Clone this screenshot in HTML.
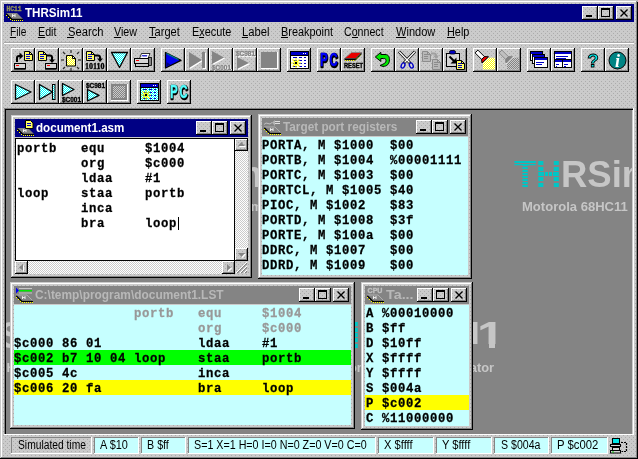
<!DOCTYPE html>
<html><head><meta charset="utf-8"><title>THRSim11</title><style>
html,body{margin:0;padding:0}
body{width:638px;height:459px;position:relative;overflow:hidden;background:#cbcbcb;will-change:transform}
div,.a,.t{position:absolute}
.t{white-space:pre;transform-origin:0 0;line-height:normal;display:block;font-family:"Liberation Sans",sans-serif}
.b{font-weight:bold}
.mo{font-family:"Liberation Mono",monospace}
svg{display:block;overflow:hidden}
.m{font:bold 12.3px "Liberation Mono",monospace;letter-spacing:.62px;transform:scaleY(1.1);transform-origin:0 10px;-webkit-text-stroke:.25px}
</style></head><body>
<svg width="0" height="0" style="position:absolute"><defs>
<pattern id="d" width="4" height="4" patternUnits="userSpaceOnUse"><rect width="4" height="4" fill="#cbcbcb"/><rect x="1" y="1" width="1" height="1" fill="#acacac"/><rect x="3" y="3" width="1" height="1" fill="#acacac"/></pattern>
<pattern id="ck" width="2" height="2" patternUnits="userSpaceOnUse"><rect width="2" height="2" fill="#fff"/><rect x="0" y="0" width="1" height="1" fill="#cbcbcb"/><rect x="1" y="1" width="1" height="1" fill="#cbcbcb"/></pattern>
<pattern id="cc" width="2" height="2" patternUnits="userSpaceOnUse"><rect width="2" height="2" fill="#fff"/><rect x="0" y="0" width="1" height="1" fill="#00ffff"/><rect x="1" y="1" width="1" height="1" fill="#00ffff"/></pattern>
<pattern id="yy" width="2" height="2" patternUnits="userSpaceOnUse"><rect width="2" height="2" fill="#fff"/><rect x="0" y="0" width="1" height="1" fill="#ffff00"/><rect x="1" y="1" width="1" height="1" fill="#ffff00"/></pattern>
<pattern id="gg" width="2" height="2" patternUnits="userSpaceOnUse"><rect width="2" height="2" fill="#cbcbcb"/><rect x="0" y="0" width="1" height="1" fill="#848484"/><rect x="1" y="1" width="1" height="1" fill="#848484"/></pattern>
</defs></svg>
<svg class="a" style="left:0px;top:0px" width="638" height="459"><rect width="638" height="459" fill="url(#d)"/></svg>
<div style="left:0px;top:0px;width:638px;height:1px;background:#c8c8c8;"></div>
<div style="left:0px;top:0px;width:1px;height:459px;background:#c8c8c8;"></div>
<div style="left:1px;top:1px;width:636px;height:1px;background:#fff;"></div>
<div style="left:1px;top:1px;width:1px;height:457px;background:#fff;"></div>
<div style="left:636px;top:1px;width:1px;height:457px;background:#848484;"></div>
<div style="left:637px;top:0px;width:1px;height:459px;background:#000;"></div>
<div style="left:637px;top:0px;width:1px;height:2px;background:#b4b4b4;"></div>
<div style="left:1px;top:457px;width:636px;height:1px;background:#848484;"></div>
<div style="left:0px;top:458px;width:638px;height:1px;background:#000;"></div>
<div style="left:4px;top:4px;width:630px;height:18px;background:#000084;"></div>
<span class="t b" style="left:25.37px;top:6px;font-size:12px;color:#fff;transform:scaleX(0.9678);">THRSim11</span>
<svg class="a" style="left:582px;top:6px" width="16" height="14"><rect width="16" height="14" fill="url(#d)"/></svg>
<div style="left:582px;top:6px;width:15px;height:1px;background:#fff;"></div>
<div style="left:582px;top:6px;width:1px;height:13px;background:#fff;"></div>
<div style="left:597px;top:6px;width:1px;height:14px;background:#000;"></div>
<div style="left:582px;top:19px;width:16px;height:1px;background:#000;"></div>
<div style="left:596px;top:7px;width:1px;height:12px;background:#848484;"></div>
<div style="left:583px;top:18px;width:14px;height:1px;background:#848484;"></div>
<div style="left:586px;top:15px;width:6px;height:2px;background:#000;"></div>
<svg class="a" style="left:598px;top:6px" width="16" height="14"><rect width="16" height="14" fill="url(#d)"/></svg>
<div style="left:598px;top:6px;width:15px;height:1px;background:#fff;"></div>
<div style="left:598px;top:6px;width:1px;height:13px;background:#fff;"></div>
<div style="left:613px;top:6px;width:1px;height:14px;background:#000;"></div>
<div style="left:598px;top:19px;width:16px;height:1px;background:#000;"></div>
<div style="left:612px;top:7px;width:1px;height:12px;background:#848484;"></div>
<div style="left:599px;top:18px;width:14px;height:1px;background:#848484;"></div>
<div style="left:601px;top:8px;width:9px;height:2px;background:#000;"></div>
<div style="left:601px;top:8px;width:1px;height:9px;background:#000;"></div>
<div style="left:609px;top:8px;width:1px;height:9px;background:#000;"></div>
<div style="left:601px;top:16px;width:9px;height:1px;background:#000;"></div>
<svg class="a" style="left:616px;top:6px" width="16" height="14"><rect width="16" height="14" fill="url(#d)"/></svg>
<div style="left:616px;top:6px;width:15px;height:1px;background:#fff;"></div>
<div style="left:616px;top:6px;width:1px;height:13px;background:#fff;"></div>
<div style="left:631px;top:6px;width:1px;height:14px;background:#000;"></div>
<div style="left:616px;top:19px;width:16px;height:1px;background:#000;"></div>
<div style="left:630px;top:7px;width:1px;height:12px;background:#848484;"></div>
<div style="left:617px;top:18px;width:14px;height:1px;background:#848484;"></div>
<svg class="a" style="left:616px;top:6px" width="16" height="14" viewBox="0 0 16 14"><path d="M4.5 3.5l7 7M11.5 3.5l-7 7" stroke="#000" stroke-width="1.4" fill="none"/></svg>
<span class="t" style="left:10.17px;top:25px;font-size:12px;color:#000;transform:scaleX(0.8418);">File</span>
<div style="left:10px;top:37px;width:6px;height:1px;background:#000;"></div>
<span class="t" style="left:37.62px;top:25px;font-size:12px;color:#000;transform:scaleX(0.8925);">Edit</span>
<div style="left:38px;top:37px;width:7px;height:1px;background:#000;"></div>
<span class="t" style="left:67.50px;top:25px;font-size:12px;color:#000;transform:scaleX(0.9344);">Search</span>
<div style="left:67px;top:37px;width:7px;height:1px;background:#000;"></div>
<span class="t" style="left:114.26px;top:25px;font-size:12px;color:#000;transform:scaleX(0.8923);">View</span>
<div style="left:114px;top:37px;width:7px;height:1px;background:#000;"></div>
<span class="t" style="left:149.46px;top:25px;font-size:12px;color:#000;transform:scaleX(0.9242);">Target</span>
<div style="left:149px;top:37px;width:7px;height:1px;background:#000;"></div>
<span class="t" style="left:192.11px;top:25px;font-size:12px;color:#000;transform:scaleX(0.9081);">Execute</span>
<div style="left:199px;top:37px;width:5px;height:1px;background:#000;"></div>
<span class="t" style="left:242.38px;top:25px;font-size:12px;color:#000;transform:scaleX(0.9388);">Label</span>
<div style="left:242px;top:37px;width:6px;height:1px;background:#000;"></div>
<span class="t" style="left:280.71px;top:25px;font-size:12px;color:#000;transform:scaleX(0.9076);">Breakpoint</span>
<div style="left:281px;top:37px;width:7px;height:1px;background:#000;"></div>
<span class="t" style="left:344.47px;top:25px;font-size:12px;color:#000;transform:scaleX(0.8860);">Connect</span>
<div style="left:352px;top:37px;width:6px;height:1px;background:#000;"></div>
<span class="t" style="left:395.96px;top:25px;font-size:12px;color:#000;transform:scaleX(0.9212);">Window</span>
<div style="left:396px;top:37px;width:10px;height:1px;background:#000;"></div>
<span class="t" style="left:447.11px;top:25px;font-size:12px;color:#000;transform:scaleX(0.9049);">Help</span>
<div style="left:447px;top:37px;width:8px;height:1px;background:#000;"></div>
<div style="left:4px;top:42px;width:630px;height:1px;background:#a8a8a8;"></div>
<div style="left:4px;top:43px;width:630px;height:1px;background:#fff;"></div>
<div style="left:11px;top:48px;width:23px;height:1px;background:#fff;"></div>
<div style="left:11px;top:48px;width:1px;height:23px;background:#fff;"></div>
<div style="left:34px;top:48px;width:1px;height:24px;background:#000;"></div>
<div style="left:11px;top:71px;width:24px;height:1px;background:#000;"></div>
<div style="left:33px;top:49px;width:1px;height:22px;background:#848484;"></div>
<div style="left:12px;top:70px;width:22px;height:1px;background:#848484;"></div>
<div style="left:35px;top:48px;width:23px;height:1px;background:#fff;"></div>
<div style="left:35px;top:48px;width:1px;height:23px;background:#fff;"></div>
<div style="left:58px;top:48px;width:1px;height:24px;background:#000;"></div>
<div style="left:35px;top:71px;width:24px;height:1px;background:#000;"></div>
<div style="left:57px;top:49px;width:1px;height:22px;background:#848484;"></div>
<div style="left:36px;top:70px;width:22px;height:1px;background:#848484;"></div>
<div style="left:59px;top:48px;width:23px;height:1px;background:#fff;"></div>
<div style="left:59px;top:48px;width:1px;height:23px;background:#fff;"></div>
<div style="left:82px;top:48px;width:1px;height:24px;background:#000;"></div>
<div style="left:59px;top:71px;width:24px;height:1px;background:#000;"></div>
<div style="left:81px;top:49px;width:1px;height:22px;background:#848484;"></div>
<div style="left:60px;top:70px;width:22px;height:1px;background:#848484;"></div>
<div style="left:83px;top:48px;width:23px;height:1px;background:#fff;"></div>
<div style="left:83px;top:48px;width:1px;height:23px;background:#fff;"></div>
<div style="left:106px;top:48px;width:1px;height:24px;background:#000;"></div>
<div style="left:83px;top:71px;width:24px;height:1px;background:#000;"></div>
<div style="left:105px;top:49px;width:1px;height:22px;background:#848484;"></div>
<div style="left:84px;top:70px;width:22px;height:1px;background:#848484;"></div>
<div style="left:107px;top:48px;width:23px;height:1px;background:#fff;"></div>
<div style="left:107px;top:48px;width:1px;height:23px;background:#fff;"></div>
<div style="left:130px;top:48px;width:1px;height:24px;background:#000;"></div>
<div style="left:107px;top:71px;width:24px;height:1px;background:#000;"></div>
<div style="left:129px;top:49px;width:1px;height:22px;background:#848484;"></div>
<div style="left:108px;top:70px;width:22px;height:1px;background:#848484;"></div>
<div style="left:131px;top:48px;width:23px;height:1px;background:#fff;"></div>
<div style="left:131px;top:48px;width:1px;height:23px;background:#fff;"></div>
<div style="left:154px;top:48px;width:1px;height:24px;background:#000;"></div>
<div style="left:131px;top:71px;width:24px;height:1px;background:#000;"></div>
<div style="left:153px;top:49px;width:1px;height:22px;background:#848484;"></div>
<div style="left:132px;top:70px;width:22px;height:1px;background:#848484;"></div>
<div style="left:161px;top:48px;width:23px;height:1px;background:#fff;"></div>
<div style="left:161px;top:48px;width:1px;height:23px;background:#fff;"></div>
<div style="left:184px;top:48px;width:1px;height:24px;background:#000;"></div>
<div style="left:161px;top:71px;width:24px;height:1px;background:#000;"></div>
<div style="left:183px;top:49px;width:1px;height:22px;background:#848484;"></div>
<div style="left:162px;top:70px;width:22px;height:1px;background:#848484;"></div>
<div style="left:185px;top:48px;width:23px;height:1px;background:#fff;"></div>
<div style="left:185px;top:48px;width:1px;height:23px;background:#fff;"></div>
<div style="left:208px;top:48px;width:1px;height:24px;background:#000;"></div>
<div style="left:185px;top:71px;width:24px;height:1px;background:#000;"></div>
<div style="left:207px;top:49px;width:1px;height:22px;background:#848484;"></div>
<div style="left:186px;top:70px;width:22px;height:1px;background:#848484;"></div>
<div style="left:209px;top:48px;width:23px;height:1px;background:#fff;"></div>
<div style="left:209px;top:48px;width:1px;height:23px;background:#fff;"></div>
<div style="left:232px;top:48px;width:1px;height:24px;background:#000;"></div>
<div style="left:209px;top:71px;width:24px;height:1px;background:#000;"></div>
<div style="left:231px;top:49px;width:1px;height:22px;background:#848484;"></div>
<div style="left:210px;top:70px;width:22px;height:1px;background:#848484;"></div>
<div style="left:233px;top:48px;width:23px;height:1px;background:#fff;"></div>
<div style="left:233px;top:48px;width:1px;height:23px;background:#fff;"></div>
<div style="left:256px;top:48px;width:1px;height:24px;background:#000;"></div>
<div style="left:233px;top:71px;width:24px;height:1px;background:#000;"></div>
<div style="left:255px;top:49px;width:1px;height:22px;background:#848484;"></div>
<div style="left:234px;top:70px;width:22px;height:1px;background:#848484;"></div>
<div style="left:257px;top:48px;width:23px;height:1px;background:#fff;"></div>
<div style="left:257px;top:48px;width:1px;height:23px;background:#fff;"></div>
<div style="left:280px;top:48px;width:1px;height:24px;background:#000;"></div>
<div style="left:257px;top:71px;width:24px;height:1px;background:#000;"></div>
<div style="left:279px;top:49px;width:1px;height:22px;background:#848484;"></div>
<div style="left:258px;top:70px;width:22px;height:1px;background:#848484;"></div>
<div style="left:287px;top:48px;width:23px;height:1px;background:#fff;"></div>
<div style="left:287px;top:48px;width:1px;height:23px;background:#fff;"></div>
<div style="left:310px;top:48px;width:1px;height:24px;background:#000;"></div>
<div style="left:287px;top:71px;width:24px;height:1px;background:#000;"></div>
<div style="left:309px;top:49px;width:1px;height:22px;background:#848484;"></div>
<div style="left:288px;top:70px;width:22px;height:1px;background:#848484;"></div>
<div style="left:317px;top:48px;width:23px;height:1px;background:#fff;"></div>
<div style="left:317px;top:48px;width:1px;height:23px;background:#fff;"></div>
<div style="left:340px;top:48px;width:1px;height:24px;background:#000;"></div>
<div style="left:317px;top:71px;width:24px;height:1px;background:#000;"></div>
<div style="left:339px;top:49px;width:1px;height:22px;background:#848484;"></div>
<div style="left:318px;top:70px;width:22px;height:1px;background:#848484;"></div>
<div style="left:341px;top:48px;width:23px;height:1px;background:#fff;"></div>
<div style="left:341px;top:48px;width:1px;height:23px;background:#fff;"></div>
<div style="left:364px;top:48px;width:1px;height:24px;background:#000;"></div>
<div style="left:341px;top:71px;width:24px;height:1px;background:#000;"></div>
<div style="left:363px;top:49px;width:1px;height:22px;background:#848484;"></div>
<div style="left:342px;top:70px;width:22px;height:1px;background:#848484;"></div>
<div style="left:371px;top:48px;width:23px;height:1px;background:#fff;"></div>
<div style="left:371px;top:48px;width:1px;height:23px;background:#fff;"></div>
<div style="left:394px;top:48px;width:1px;height:24px;background:#000;"></div>
<div style="left:371px;top:71px;width:24px;height:1px;background:#000;"></div>
<div style="left:393px;top:49px;width:1px;height:22px;background:#848484;"></div>
<div style="left:372px;top:70px;width:22px;height:1px;background:#848484;"></div>
<div style="left:395px;top:48px;width:23px;height:1px;background:#fff;"></div>
<div style="left:395px;top:48px;width:1px;height:23px;background:#fff;"></div>
<div style="left:418px;top:48px;width:1px;height:24px;background:#000;"></div>
<div style="left:395px;top:71px;width:24px;height:1px;background:#000;"></div>
<div style="left:417px;top:49px;width:1px;height:22px;background:#848484;"></div>
<div style="left:396px;top:70px;width:22px;height:1px;background:#848484;"></div>
<div style="left:419px;top:48px;width:23px;height:1px;background:#fff;"></div>
<div style="left:419px;top:48px;width:1px;height:23px;background:#fff;"></div>
<div style="left:442px;top:48px;width:1px;height:24px;background:#000;"></div>
<div style="left:419px;top:71px;width:24px;height:1px;background:#000;"></div>
<div style="left:441px;top:49px;width:1px;height:22px;background:#848484;"></div>
<div style="left:420px;top:70px;width:22px;height:1px;background:#848484;"></div>
<div style="left:443px;top:48px;width:23px;height:1px;background:#fff;"></div>
<div style="left:443px;top:48px;width:1px;height:23px;background:#fff;"></div>
<div style="left:466px;top:48px;width:1px;height:24px;background:#000;"></div>
<div style="left:443px;top:71px;width:24px;height:1px;background:#000;"></div>
<div style="left:465px;top:49px;width:1px;height:22px;background:#848484;"></div>
<div style="left:444px;top:70px;width:22px;height:1px;background:#848484;"></div>
<div style="left:473px;top:48px;width:23px;height:1px;background:#fff;"></div>
<div style="left:473px;top:48px;width:1px;height:23px;background:#fff;"></div>
<div style="left:496px;top:48px;width:1px;height:24px;background:#000;"></div>
<div style="left:473px;top:71px;width:24px;height:1px;background:#000;"></div>
<div style="left:495px;top:49px;width:1px;height:22px;background:#848484;"></div>
<div style="left:474px;top:70px;width:22px;height:1px;background:#848484;"></div>
<div style="left:497px;top:48px;width:23px;height:1px;background:#fff;"></div>
<div style="left:497px;top:48px;width:1px;height:23px;background:#fff;"></div>
<div style="left:520px;top:48px;width:1px;height:24px;background:#000;"></div>
<div style="left:497px;top:71px;width:24px;height:1px;background:#000;"></div>
<div style="left:519px;top:49px;width:1px;height:22px;background:#848484;"></div>
<div style="left:498px;top:70px;width:22px;height:1px;background:#848484;"></div>
<div style="left:527px;top:48px;width:23px;height:1px;background:#fff;"></div>
<div style="left:527px;top:48px;width:1px;height:23px;background:#fff;"></div>
<div style="left:550px;top:48px;width:1px;height:24px;background:#000;"></div>
<div style="left:527px;top:71px;width:24px;height:1px;background:#000;"></div>
<div style="left:549px;top:49px;width:1px;height:22px;background:#848484;"></div>
<div style="left:528px;top:70px;width:22px;height:1px;background:#848484;"></div>
<div style="left:551px;top:48px;width:23px;height:1px;background:#fff;"></div>
<div style="left:551px;top:48px;width:1px;height:23px;background:#fff;"></div>
<div style="left:574px;top:48px;width:1px;height:24px;background:#000;"></div>
<div style="left:551px;top:71px;width:24px;height:1px;background:#000;"></div>
<div style="left:573px;top:49px;width:1px;height:22px;background:#848484;"></div>
<div style="left:552px;top:70px;width:22px;height:1px;background:#848484;"></div>
<div style="left:581px;top:48px;width:23px;height:1px;background:#fff;"></div>
<div style="left:581px;top:48px;width:1px;height:23px;background:#fff;"></div>
<div style="left:604px;top:48px;width:1px;height:24px;background:#000;"></div>
<div style="left:581px;top:71px;width:24px;height:1px;background:#000;"></div>
<div style="left:603px;top:49px;width:1px;height:22px;background:#848484;"></div>
<div style="left:582px;top:70px;width:22px;height:1px;background:#848484;"></div>
<div style="left:605px;top:48px;width:23px;height:1px;background:#fff;"></div>
<div style="left:605px;top:48px;width:1px;height:23px;background:#fff;"></div>
<div style="left:628px;top:48px;width:1px;height:24px;background:#000;"></div>
<div style="left:605px;top:71px;width:24px;height:1px;background:#000;"></div>
<div style="left:627px;top:49px;width:1px;height:22px;background:#848484;"></div>
<div style="left:606px;top:70px;width:22px;height:1px;background:#848484;"></div>
<div style="left:11px;top:80px;width:23px;height:1px;background:#fff;"></div>
<div style="left:11px;top:80px;width:1px;height:23px;background:#fff;"></div>
<div style="left:34px;top:80px;width:1px;height:24px;background:#000;"></div>
<div style="left:11px;top:103px;width:24px;height:1px;background:#000;"></div>
<div style="left:33px;top:81px;width:1px;height:22px;background:#848484;"></div>
<div style="left:12px;top:102px;width:22px;height:1px;background:#848484;"></div>
<div style="left:35px;top:80px;width:23px;height:1px;background:#fff;"></div>
<div style="left:35px;top:80px;width:1px;height:23px;background:#fff;"></div>
<div style="left:58px;top:80px;width:1px;height:24px;background:#000;"></div>
<div style="left:35px;top:103px;width:24px;height:1px;background:#000;"></div>
<div style="left:57px;top:81px;width:1px;height:22px;background:#848484;"></div>
<div style="left:36px;top:102px;width:22px;height:1px;background:#848484;"></div>
<div style="left:59px;top:80px;width:23px;height:1px;background:#fff;"></div>
<div style="left:59px;top:80px;width:1px;height:23px;background:#fff;"></div>
<div style="left:82px;top:80px;width:1px;height:24px;background:#000;"></div>
<div style="left:59px;top:103px;width:24px;height:1px;background:#000;"></div>
<div style="left:81px;top:81px;width:1px;height:22px;background:#848484;"></div>
<div style="left:60px;top:102px;width:22px;height:1px;background:#848484;"></div>
<div style="left:83px;top:80px;width:23px;height:1px;background:#fff;"></div>
<div style="left:83px;top:80px;width:1px;height:23px;background:#fff;"></div>
<div style="left:106px;top:80px;width:1px;height:24px;background:#000;"></div>
<div style="left:83px;top:103px;width:24px;height:1px;background:#000;"></div>
<div style="left:105px;top:81px;width:1px;height:22px;background:#848484;"></div>
<div style="left:84px;top:102px;width:22px;height:1px;background:#848484;"></div>
<div style="left:107px;top:80px;width:23px;height:1px;background:#fff;"></div>
<div style="left:107px;top:80px;width:1px;height:23px;background:#fff;"></div>
<div style="left:130px;top:80px;width:1px;height:24px;background:#000;"></div>
<div style="left:107px;top:103px;width:24px;height:1px;background:#000;"></div>
<div style="left:129px;top:81px;width:1px;height:22px;background:#848484;"></div>
<div style="left:108px;top:102px;width:22px;height:1px;background:#848484;"></div>
<div style="left:137px;top:80px;width:23px;height:1px;background:#fff;"></div>
<div style="left:137px;top:80px;width:1px;height:23px;background:#fff;"></div>
<div style="left:160px;top:80px;width:1px;height:24px;background:#000;"></div>
<div style="left:137px;top:103px;width:24px;height:1px;background:#000;"></div>
<div style="left:159px;top:81px;width:1px;height:22px;background:#848484;"></div>
<div style="left:138px;top:102px;width:22px;height:1px;background:#848484;"></div>
<div style="left:167px;top:80px;width:23px;height:1px;background:#fff;"></div>
<div style="left:167px;top:80px;width:1px;height:23px;background:#fff;"></div>
<div style="left:190px;top:80px;width:1px;height:24px;background:#000;"></div>
<div style="left:167px;top:103px;width:24px;height:1px;background:#000;"></div>
<div style="left:189px;top:81px;width:1px;height:22px;background:#848484;"></div>
<div style="left:168px;top:102px;width:22px;height:1px;background:#848484;"></div>
<div style="left:4px;top:108px;width:630px;height:1px;background:#848484;"></div>
<div style="left:4px;top:108px;width:1px;height:327px;background:#848484;"></div>
<div style="left:5px;top:109px;width:628px;height:1px;background:#000;"></div>
<div style="left:5px;top:109px;width:1px;height:325px;background:#000;"></div>
<div style="left:6px;top:110px;width:626px;height:324px;background:#848484;"></div>
<div style="left:633px;top:108px;width:1px;height:327px;background:#fff;"></div>
<div style="left:4px;top:434px;width:630px;height:1px;background:#fff;"></div>
<div style="left:6px;top:110px;width:626px;height:324px;overflow:hidden">
<span class="t b" style="left:115.60px;top:44px;font-size:36px;color:#00c6c6;transform:scaleX(1.0122);">T</span>
<span class="t b" style="left:137.70px;top:44px;font-size:36px;color:#00c6c6;transform:scaleX(0.9668);">H</span>
<span class="t b" style="left:162.59px;top:44px;font-size:36px;color:#c6c6c6;transform:scaleX(1.0140);">RSim11</span>
<span class="t b" style="left:123.55px;top:88.5px;font-size:13px;color:#c6c6c6;transform:scaleX(0.9946);">Motorola 68HC11 Simulator</span>
<div style="left:139px;top:55.3px;width:23px;height:1.5px;background:#848484;"></div>
<div style="left:139px;top:61px;width:23px;height:1px;background:#848484;"></div>
<div style="left:139px;top:66px;width:23px;height:1px;background:#848484;"></div>
<div style="left:139px;top:71.2px;width:23px;height:1.5px;background:#848484;"></div>
<div style="left:145.6px;top:60px;width:1.0px;height:9px;background:#848484;"></div>
<div style="left:149.5px;top:60px;width:1.5px;height:9px;background:#848484;"></div>
<div style="left:153.8px;top:60px;width:1.0px;height:9px;background:#848484;"></div>
<span class="t b" style="left:507.60px;top:44px;font-size:36px;color:#00c6c6;transform:scaleX(1.0122);">T</span>
<span class="t b" style="left:529.70px;top:44px;font-size:36px;color:#00c6c6;transform:scaleX(0.9668);">H</span>
<span class="t b" style="left:554.59px;top:44px;font-size:36px;color:#c6c6c6;transform:scaleX(1.0140);">RSim11</span>
<span class="t b" style="left:515.54px;top:88.5px;font-size:13px;color:#c6c6c6;transform:scaleX(1.0033);">Motorola 68HC11</span>
<div style="left:508px;top:53px;width:22px;height:1px;background:#848484;"></div>
<div style="left:508px;top:56px;width:22px;height:1px;background:#848484;"></div>
<div style="left:508px;top:59px;width:22px;height:1px;background:#848484;"></div>
<div style="left:508px;top:62px;width:22px;height:1px;background:#848484;"></div>
<div style="left:508px;top:65px;width:22px;height:1px;background:#848484;"></div>
<div style="left:508px;top:68px;width:22px;height:1px;background:#848484;"></div>
<div style="left:508px;top:71px;width:22px;height:1px;background:#848484;"></div>
<div style="left:508px;top:74px;width:22px;height:1px;background:#848484;"></div>
<div style="left:531px;top:55.3px;width:23px;height:1.5px;background:#848484;"></div>
<div style="left:531px;top:61px;width:23px;height:1px;background:#848484;"></div>
<div style="left:531px;top:66px;width:23px;height:1px;background:#848484;"></div>
<div style="left:531px;top:71.2px;width:23px;height:1.5px;background:#848484;"></div>
<div style="left:537.6px;top:60px;width:1.0px;height:9px;background:#848484;"></div>
<div style="left:541.5px;top:60px;width:1.5px;height:9px;background:#848484;"></div>
<div style="left:545.8px;top:60px;width:1.0px;height:9px;background:#848484;"></div>
<span class="t b" style="left:-80.40px;top:205px;font-size:36px;color:#00c6c6;transform:scaleX(1.0122);">T</span>
<span class="t b" style="left:-58.30px;top:205px;font-size:36px;color:#00c6c6;transform:scaleX(0.9668);">H</span>
<span class="t b" style="left:-33.41px;top:205px;font-size:36px;color:#c6c6c6;transform:scaleX(1.0140);">RSim11</span>
<span class="t b" style="left:-72.45px;top:249.5px;font-size:13px;color:#c6c6c6;transform:scaleX(0.9946);">Motorola 68HC11 Simulator</span>
<div style="left:-57px;top:216.3px;width:23px;height:1.5px;background:#848484;"></div>
<div style="left:-57px;top:222px;width:23px;height:1px;background:#848484;"></div>
<div style="left:-57px;top:227px;width:23px;height:1px;background:#848484;"></div>
<div style="left:-57px;top:232.2px;width:23px;height:1.5px;background:#848484;"></div>
<div style="left:-50.4px;top:221px;width:1.0px;height:9px;background:#848484;"></div>
<div style="left:-46.5px;top:221px;width:1.5px;height:9px;background:#848484;"></div>
<div style="left:-42.2px;top:221px;width:1.0px;height:9px;background:#848484;"></div>
<span class="t b" style="left:311.60px;top:205px;font-size:36px;color:#00c6c6;transform:scaleX(1.0122);">T</span>
<span class="t b" style="left:328.70px;top:205px;font-size:36px;color:#00c6c6;transform:scaleX(0.9668);">H</span>
<span class="t b" style="left:358.83px;top:205px;font-size:36px;color:#c6c6c6;transform:scaleX(0.9149);">RSim</span>
<span class="t b" style="left:452.78px;top:205px;font-size:36px;color:#c6c6c6;transform:scaleX(1.3800);">1</span>
<span class="t b" style="left:471.08px;top:205px;font-size:36px;color:#c6c6c6;transform:scaleX(1.3800);">1</span>
<div style="left:462px;top:233.5px;width:20.8px;height:5.5px;background:#848484;"></div>
<div style="left:489.4px;top:233.5px;width:10px;height:5.5px;background:#848484;"></div>
<span class="t b" style="left:319.55px;top:249.5px;font-size:13px;color:#c6c6c6;transform:scaleX(0.9946);">Motorola 68HC11 Simulator</span>
<div style="left:330px;top:216.3px;width:23px;height:1.5px;background:#848484;"></div>
<div style="left:330px;top:222px;width:23px;height:1px;background:#848484;"></div>
<div style="left:330px;top:227px;width:23px;height:1px;background:#848484;"></div>
<div style="left:330px;top:232.2px;width:23px;height:1.5px;background:#848484;"></div>
<div style="left:336.6px;top:221px;width:1.0px;height:9px;background:#848484;"></div>
<div style="left:340.5px;top:221px;width:1.5px;height:9px;background:#848484;"></div>
<div style="left:344.8px;top:221px;width:1.0px;height:9px;background:#848484;"></div>
</div>
<div style="left:11px;top:437px;width:81px;height:1px;background:#848484;"></div>
<div style="left:11px;top:437px;width:1px;height:17px;background:#848484;"></div>
<div style="left:91px;top:437px;width:1px;height:17px;background:#fff;"></div>
<div style="left:11px;top:453px;width:81px;height:1px;background:#fff;"></div>
<span class="t" style="left:17.54px;top:438px;font-size:12px;color:#000;transform:scaleX(0.8557);">Simulated time</span>
<div style="left:94px;top:437px;width:45px;height:17px;background:#c6ffff;"></div>
<div style="left:94px;top:437px;width:45px;height:1px;background:#848484;"></div>
<div style="left:94px;top:437px;width:1px;height:17px;background:#848484;"></div>
<div style="left:138px;top:437px;width:1px;height:17px;background:#fff;"></div>
<div style="left:94px;top:453px;width:45px;height:1px;background:#fff;"></div>
<span class="t" style="left:100.48px;top:438px;font-size:12px;color:#000;transform:scaleX(0.9101);">A $10</span>
<div style="left:141px;top:437px;width:45px;height:17px;background:#c6ffff;"></div>
<div style="left:141px;top:437px;width:45px;height:1px;background:#848484;"></div>
<div style="left:141px;top:437px;width:1px;height:17px;background:#848484;"></div>
<div style="left:185px;top:437px;width:1px;height:17px;background:#fff;"></div>
<div style="left:141px;top:453px;width:45px;height:1px;background:#fff;"></div>
<span class="t" style="left:147.12px;top:438px;font-size:12px;color:#000;transform:scaleX(0.8933);">B $ff</span>
<div style="left:188px;top:437px;width:188px;height:17px;background:#c6ffff;"></div>
<div style="left:188px;top:437px;width:188px;height:1px;background:#848484;"></div>
<div style="left:188px;top:437px;width:1px;height:17px;background:#848484;"></div>
<div style="left:375px;top:437px;width:1px;height:17px;background:#fff;"></div>
<div style="left:188px;top:453px;width:188px;height:1px;background:#fff;"></div>
<span class="t" style="left:194.02px;top:438px;font-size:12px;color:#000;transform:scaleX(0.8921);">S=1 X=1 H=0 I=0 N=0 Z=0 V=0 C=0</span>
<div style="left:378px;top:437px;width:56px;height:17px;background:#c6ffff;"></div>
<div style="left:378px;top:437px;width:56px;height:1px;background:#848484;"></div>
<div style="left:378px;top:437px;width:1px;height:17px;background:#848484;"></div>
<div style="left:433px;top:437px;width:1px;height:17px;background:#fff;"></div>
<div style="left:378px;top:453px;width:56px;height:1px;background:#fff;"></div>
<span class="t" style="left:383.75px;top:438px;font-size:12px;color:#000;transform:scaleX(0.9292);">X $ffff</span>
<div style="left:436px;top:437px;width:56px;height:17px;background:#c6ffff;"></div>
<div style="left:436px;top:437px;width:56px;height:1px;background:#848484;"></div>
<div style="left:436px;top:437px;width:1px;height:17px;background:#848484;"></div>
<div style="left:491px;top:437px;width:1px;height:17px;background:#fff;"></div>
<div style="left:436px;top:453px;width:56px;height:1px;background:#fff;"></div>
<span class="t" style="left:441.76px;top:438px;font-size:12px;color:#000;transform:scaleX(0.9259);">Y $ffff</span>
<div style="left:494px;top:437px;width:55px;height:17px;background:#c6ffff;"></div>
<div style="left:494px;top:437px;width:55px;height:1px;background:#848484;"></div>
<div style="left:494px;top:437px;width:1px;height:17px;background:#848484;"></div>
<div style="left:548px;top:437px;width:1px;height:17px;background:#fff;"></div>
<div style="left:494px;top:453px;width:55px;height:1px;background:#fff;"></div>
<span class="t" style="left:500.52px;top:438px;font-size:12px;color:#000;transform:scaleX(0.8829);">S $004a</span>
<div style="left:551px;top:437px;width:57px;height:17px;background:#c6ffff;"></div>
<div style="left:551px;top:437px;width:57px;height:1px;background:#848484;"></div>
<div style="left:551px;top:437px;width:1px;height:17px;background:#848484;"></div>
<div style="left:607px;top:437px;width:1px;height:17px;background:#fff;"></div>
<div style="left:551px;top:453px;width:57px;height:1px;background:#fff;"></div>
<span class="t" style="left:557.47px;top:438px;font-size:12px;color:#000;transform:scaleX(0.9425);">P $c002</span>
<svg class="a" style="left:11px;top:115px" width="241" height="163"><rect width="241" height="163" fill="url(#d)"/></svg>
<div style="left:11px;top:115px;width:241px;height:1px;background:#cbcbcb;"></div>
<div style="left:11px;top:115px;width:1px;height:163px;background:#cbcbcb;"></div>
<div style="left:12px;top:116px;width:239px;height:1px;background:#fff;"></div>
<div style="left:12px;top:116px;width:1px;height:161px;background:#fff;"></div>
<div style="left:250px;top:116px;width:1px;height:161px;background:#848484;"></div>
<div style="left:12px;top:276px;width:239px;height:1px;background:#848484;"></div>
<div style="left:251px;top:115px;width:1px;height:163px;background:#000;"></div>
<div style="left:11px;top:277px;width:241px;height:1px;background:#000;"></div>
<div style="left:15px;top:119px;width:233px;height:18px;background:#000084;"></div>
<span class="t b" style="left:35.52px;top:121px;font-size:12px;color:#fff;transform:scaleX(0.9675);">document1.asm</span>
<svg class="a" style="left:196px;top:121px" width="16" height="14"><rect width="16" height="14" fill="url(#d)"/></svg>
<div style="left:196px;top:121px;width:15px;height:1px;background:#fff;"></div>
<div style="left:196px;top:121px;width:1px;height:13px;background:#fff;"></div>
<div style="left:211px;top:121px;width:1px;height:14px;background:#000;"></div>
<div style="left:196px;top:134px;width:16px;height:1px;background:#000;"></div>
<div style="left:210px;top:122px;width:1px;height:12px;background:#848484;"></div>
<div style="left:197px;top:133px;width:14px;height:1px;background:#848484;"></div>
<div style="left:200px;top:130px;width:6px;height:2px;background:#000;"></div>
<svg class="a" style="left:212px;top:121px" width="16" height="14"><rect width="16" height="14" fill="url(#d)"/></svg>
<div style="left:212px;top:121px;width:15px;height:1px;background:#fff;"></div>
<div style="left:212px;top:121px;width:1px;height:13px;background:#fff;"></div>
<div style="left:227px;top:121px;width:1px;height:14px;background:#000;"></div>
<div style="left:212px;top:134px;width:16px;height:1px;background:#000;"></div>
<div style="left:226px;top:122px;width:1px;height:12px;background:#848484;"></div>
<div style="left:213px;top:133px;width:14px;height:1px;background:#848484;"></div>
<div style="left:215px;top:123px;width:9px;height:2px;background:#000;"></div>
<div style="left:215px;top:123px;width:1px;height:9px;background:#000;"></div>
<div style="left:223px;top:123px;width:1px;height:9px;background:#000;"></div>
<div style="left:215px;top:131px;width:9px;height:1px;background:#000;"></div>
<svg class="a" style="left:230px;top:121px" width="16" height="14"><rect width="16" height="14" fill="url(#d)"/></svg>
<div style="left:230px;top:121px;width:15px;height:1px;background:#fff;"></div>
<div style="left:230px;top:121px;width:1px;height:13px;background:#fff;"></div>
<div style="left:245px;top:121px;width:1px;height:14px;background:#000;"></div>
<div style="left:230px;top:134px;width:16px;height:1px;background:#000;"></div>
<div style="left:244px;top:122px;width:1px;height:12px;background:#848484;"></div>
<div style="left:231px;top:133px;width:14px;height:1px;background:#848484;"></div>
<svg class="a" style="left:230px;top:121px" width="16" height="14" viewBox="0 0 16 14"><path d="M4.5 3.5l7 7M11.5 3.5l-7 7" stroke="#000" stroke-width="1.4" fill="none"/></svg>
<div style="left:15px;top:138px;width:233px;height:1px;background:#000;"></div>
<div style="left:15px;top:138px;width:1px;height:123px;background:#000;"></div>
<div style="left:16px;top:139px;width:218px;height:121px;background:#fff;"></div>
<div style="left:234px;top:138px;width:1px;height:123px;background:#000;"></div>
<div style="left:15px;top:260px;width:220px;height:1px;background:#000;"></div>
<svg class="a" style="left:235px;top:139px" width="13" height="122"><rect width="13" height="122" fill="url(#ck)"/></svg>
<svg class="a" style="left:235px;top:139px" width="13" height="12"><rect width="13" height="12" fill="url(#d)"/></svg>
<div style="left:235px;top:139px;width:12px;height:1px;background:#fff;"></div>
<div style="left:235px;top:139px;width:1px;height:11px;background:#fff;"></div>
<div style="left:247px;top:139px;width:1px;height:12px;background:#000;"></div>
<div style="left:235px;top:150px;width:13px;height:1px;background:#000;"></div>
<div style="left:246px;top:140px;width:1px;height:10px;background:#848484;"></div>
<div style="left:236px;top:149px;width:11px;height:1px;background:#848484;"></div>
<svg class="a" style="left:235px;top:248px" width="13" height="13"><rect width="13" height="13" fill="url(#d)"/></svg>
<div style="left:235px;top:248px;width:12px;height:1px;background:#fff;"></div>
<div style="left:235px;top:248px;width:1px;height:12px;background:#fff;"></div>
<div style="left:247px;top:248px;width:1px;height:13px;background:#000;"></div>
<div style="left:235px;top:260px;width:13px;height:1px;background:#000;"></div>
<div style="left:246px;top:249px;width:1px;height:11px;background:#848484;"></div>
<div style="left:236px;top:259px;width:11px;height:1px;background:#848484;"></div>
<svg class="a" style="left:15px;top:261px" width="220" height="13"><rect width="220" height="13" fill="url(#ck)"/></svg>
<svg class="a" style="left:15px;top:261px" width="13" height="13"><rect width="13" height="13" fill="url(#d)"/></svg>
<div style="left:15px;top:261px;width:12px;height:1px;background:#fff;"></div>
<div style="left:15px;top:261px;width:1px;height:12px;background:#fff;"></div>
<div style="left:27px;top:261px;width:1px;height:13px;background:#000;"></div>
<div style="left:15px;top:273px;width:13px;height:1px;background:#000;"></div>
<div style="left:26px;top:262px;width:1px;height:11px;background:#848484;"></div>
<div style="left:16px;top:272px;width:11px;height:1px;background:#848484;"></div>
<svg class="a" style="left:222px;top:261px" width="13" height="13"><rect width="13" height="13" fill="url(#d)"/></svg>
<div style="left:222px;top:261px;width:12px;height:1px;background:#fff;"></div>
<div style="left:222px;top:261px;width:1px;height:12px;background:#fff;"></div>
<div style="left:234px;top:261px;width:1px;height:13px;background:#000;"></div>
<div style="left:222px;top:273px;width:13px;height:1px;background:#000;"></div>
<div style="left:233px;top:262px;width:1px;height:11px;background:#848484;"></div>
<div style="left:223px;top:272px;width:11px;height:1px;background:#848484;"></div>
<span class="t m" style="left:17px;top:142px;color:#000">portb</span>
<span class="t m" style="left:81px;top:142px;color:#000">equ</span>
<span class="t m" style="left:145px;top:142px;color:#000">$1004</span>
<span class="t m" style="left:81px;top:157px;color:#000">org</span>
<span class="t m" style="left:145px;top:157px;color:#000">$c000</span>
<span class="t m" style="left:81px;top:172px;color:#000">ldaa</span>
<span class="t m" style="left:145px;top:172px;color:#000">#1</span>
<span class="t m" style="left:17px;top:187px;color:#000">loop</span>
<span class="t m" style="left:81px;top:187px;color:#000">staa</span>
<span class="t m" style="left:145px;top:187px;color:#000">portb</span>
<span class="t m" style="left:81px;top:202px;color:#000">inca</span>
<span class="t m" style="left:81px;top:217px;color:#000">bra</span>
<span class="t m" style="left:145px;top:217px;color:#000">loop</span>
<div style="left:178px;top:217px;width:1px;height:13px;background:#000;"></div>
<svg class="a" style="left:258px;top:114px" width="214" height="165"><rect width="214" height="165" fill="url(#d)"/></svg>
<div style="left:258px;top:114px;width:214px;height:1px;background:#cbcbcb;"></div>
<div style="left:258px;top:114px;width:1px;height:165px;background:#cbcbcb;"></div>
<div style="left:259px;top:115px;width:212px;height:1px;background:#fff;"></div>
<div style="left:259px;top:115px;width:1px;height:163px;background:#fff;"></div>
<div style="left:470px;top:115px;width:1px;height:163px;background:#848484;"></div>
<div style="left:259px;top:277px;width:212px;height:1px;background:#848484;"></div>
<div style="left:471px;top:114px;width:1px;height:165px;background:#000;"></div>
<div style="left:258px;top:278px;width:214px;height:1px;background:#000;"></div>
<div style="left:262px;top:118px;width:206px;height:18px;background:#848484;"></div>
<span class="t b" style="left:283.17px;top:120px;font-size:12px;color:#b8b8b8;transform:scaleX(0.9814);">Target port registers</span>
<svg class="a" style="left:416px;top:120px" width="16" height="14"><rect width="16" height="14" fill="url(#d)"/></svg>
<div style="left:416px;top:120px;width:15px;height:1px;background:#fff;"></div>
<div style="left:416px;top:120px;width:1px;height:13px;background:#fff;"></div>
<div style="left:431px;top:120px;width:1px;height:14px;background:#000;"></div>
<div style="left:416px;top:133px;width:16px;height:1px;background:#000;"></div>
<div style="left:430px;top:121px;width:1px;height:12px;background:#848484;"></div>
<div style="left:417px;top:132px;width:14px;height:1px;background:#848484;"></div>
<div style="left:420px;top:129px;width:6px;height:2px;background:#000;"></div>
<svg class="a" style="left:432px;top:120px" width="16" height="14"><rect width="16" height="14" fill="url(#d)"/></svg>
<div style="left:432px;top:120px;width:15px;height:1px;background:#fff;"></div>
<div style="left:432px;top:120px;width:1px;height:13px;background:#fff;"></div>
<div style="left:447px;top:120px;width:1px;height:14px;background:#000;"></div>
<div style="left:432px;top:133px;width:16px;height:1px;background:#000;"></div>
<div style="left:446px;top:121px;width:1px;height:12px;background:#848484;"></div>
<div style="left:433px;top:132px;width:14px;height:1px;background:#848484;"></div>
<div style="left:435px;top:122px;width:9px;height:2px;background:#000;"></div>
<div style="left:435px;top:122px;width:1px;height:9px;background:#000;"></div>
<div style="left:443px;top:122px;width:1px;height:9px;background:#000;"></div>
<div style="left:435px;top:130px;width:9px;height:1px;background:#000;"></div>
<svg class="a" style="left:450px;top:120px" width="16" height="14"><rect width="16" height="14" fill="url(#d)"/></svg>
<div style="left:450px;top:120px;width:15px;height:1px;background:#fff;"></div>
<div style="left:450px;top:120px;width:1px;height:13px;background:#fff;"></div>
<div style="left:465px;top:120px;width:1px;height:14px;background:#000;"></div>
<div style="left:450px;top:133px;width:16px;height:1px;background:#000;"></div>
<div style="left:464px;top:121px;width:1px;height:12px;background:#848484;"></div>
<div style="left:451px;top:132px;width:14px;height:1px;background:#848484;"></div>
<svg class="a" style="left:450px;top:120px" width="16" height="14" viewBox="0 0 16 14"><path d="M4.5 3.5l7 7M11.5 3.5l-7 7" stroke="#000" stroke-width="1.4" fill="none"/></svg>
<div style="left:262px;top:137px;width:206px;height:138px;background:#c6ffff;"></div>
<span class="t m" style="left:262px;top:139px;color:#000">PORTA, M $1000  $00</span>
<span class="t m" style="left:262px;top:154px;color:#000">PORTB, M $1004  %00001111</span>
<span class="t m" style="left:262px;top:169px;color:#000">PORTC, M $1003  $00</span>
<span class="t m" style="left:262px;top:184px;color:#000">PORTCL, M $1005 $40</span>
<span class="t m" style="left:262px;top:199px;color:#000">PIOC, M $1002   $83</span>
<span class="t m" style="left:262px;top:214px;color:#000">PORTD, M $1008  $3f</span>
<span class="t m" style="left:262px;top:229px;color:#000">PORTE, M $100a  $00</span>
<span class="t m" style="left:262px;top:244px;color:#000">DDRC, M $1007   $00</span>
<span class="t m" style="left:262px;top:259px;color:#000">DDRD, M $1009   $00</span>
<svg class="a" style="left:10px;top:282px" width="345" height="147"><rect width="345" height="147" fill="url(#d)"/></svg>
<div style="left:10px;top:282px;width:345px;height:1px;background:#cbcbcb;"></div>
<div style="left:10px;top:282px;width:1px;height:147px;background:#cbcbcb;"></div>
<div style="left:11px;top:283px;width:343px;height:1px;background:#fff;"></div>
<div style="left:11px;top:283px;width:1px;height:145px;background:#fff;"></div>
<div style="left:353px;top:283px;width:1px;height:145px;background:#848484;"></div>
<div style="left:11px;top:427px;width:343px;height:1px;background:#848484;"></div>
<div style="left:354px;top:282px;width:1px;height:147px;background:#000;"></div>
<div style="left:10px;top:428px;width:345px;height:1px;background:#000;"></div>
<div style="left:14px;top:286px;width:337px;height:18px;background:#848484;"></div>
<span class="t b" style="left:34.51px;top:288px;font-size:12px;color:#b8b8b8;transform:scaleX(0.9926);">C:\temp\program\document1.LST</span>
<svg class="a" style="left:299px;top:288px" width="16" height="14"><rect width="16" height="14" fill="url(#d)"/></svg>
<div style="left:299px;top:288px;width:15px;height:1px;background:#fff;"></div>
<div style="left:299px;top:288px;width:1px;height:13px;background:#fff;"></div>
<div style="left:314px;top:288px;width:1px;height:14px;background:#000;"></div>
<div style="left:299px;top:301px;width:16px;height:1px;background:#000;"></div>
<div style="left:313px;top:289px;width:1px;height:12px;background:#848484;"></div>
<div style="left:300px;top:300px;width:14px;height:1px;background:#848484;"></div>
<div style="left:303px;top:297px;width:6px;height:2px;background:#000;"></div>
<svg class="a" style="left:315px;top:288px" width="16" height="14"><rect width="16" height="14" fill="url(#d)"/></svg>
<div style="left:315px;top:288px;width:15px;height:1px;background:#fff;"></div>
<div style="left:315px;top:288px;width:1px;height:13px;background:#fff;"></div>
<div style="left:330px;top:288px;width:1px;height:14px;background:#000;"></div>
<div style="left:315px;top:301px;width:16px;height:1px;background:#000;"></div>
<div style="left:329px;top:289px;width:1px;height:12px;background:#848484;"></div>
<div style="left:316px;top:300px;width:14px;height:1px;background:#848484;"></div>
<div style="left:318px;top:290px;width:9px;height:2px;background:#000;"></div>
<div style="left:318px;top:290px;width:1px;height:9px;background:#000;"></div>
<div style="left:326px;top:290px;width:1px;height:9px;background:#000;"></div>
<div style="left:318px;top:298px;width:9px;height:1px;background:#000;"></div>
<svg class="a" style="left:333px;top:288px" width="16" height="14"><rect width="16" height="14" fill="url(#d)"/></svg>
<div style="left:333px;top:288px;width:15px;height:1px;background:#fff;"></div>
<div style="left:333px;top:288px;width:1px;height:13px;background:#fff;"></div>
<div style="left:348px;top:288px;width:1px;height:14px;background:#000;"></div>
<div style="left:333px;top:301px;width:16px;height:1px;background:#000;"></div>
<div style="left:347px;top:289px;width:1px;height:12px;background:#848484;"></div>
<div style="left:334px;top:300px;width:14px;height:1px;background:#848484;"></div>
<svg class="a" style="left:333px;top:288px" width="16" height="14" viewBox="0 0 16 14"><path d="M4.5 3.5l7 7M11.5 3.5l-7 7" stroke="#000" stroke-width="1.4" fill="none"/></svg>
<div style="left:14px;top:305px;width:337px;height:120px;background:#c6ffff;"></div>
<span class="t m" style="left:14px;top:307px;color:#989898">               portb   equ     $1004</span>
<span class="t m" style="left:14px;top:322px;color:#989898">                       org     $c000</span>
<span class="t m" style="left:14px;top:337px;color:#000">$c000 86 01            ldaa    #1</span>
<div style="left:14px;top:350px;width:337px;height:15px;background:#00ff00;"></div>
<span class="t m" style="left:14px;top:352px;color:#000">$c002 b7 10 04 loop    staa    portb</span>
<span class="t m" style="left:14px;top:367px;color:#000">$c005 4c               inca</span>
<div style="left:14px;top:380px;width:337px;height:15px;background:#ffff00;"></div>
<span class="t m" style="left:14px;top:382px;color:#000">$c006 20 fa            bra     loop</span>
<svg class="a" style="left:361px;top:282px" width="112" height="148"><rect width="112" height="148" fill="url(#d)"/></svg>
<div style="left:361px;top:282px;width:112px;height:1px;background:#cbcbcb;"></div>
<div style="left:361px;top:282px;width:1px;height:148px;background:#cbcbcb;"></div>
<div style="left:362px;top:283px;width:110px;height:1px;background:#fff;"></div>
<div style="left:362px;top:283px;width:1px;height:146px;background:#fff;"></div>
<div style="left:471px;top:283px;width:1px;height:146px;background:#848484;"></div>
<div style="left:362px;top:428px;width:110px;height:1px;background:#848484;"></div>
<div style="left:472px;top:282px;width:1px;height:148px;background:#000;"></div>
<div style="left:361px;top:429px;width:112px;height:1px;background:#000;"></div>
<div style="left:365px;top:286px;width:104px;height:18px;background:#848484;"></div>
<span class="t b" style="left:385.84px;top:288px;font-size:12px;color:#b8b8b8;transform:scaleX(1.1918);">Ta...</span>
<svg class="a" style="left:417px;top:288px" width="16" height="14"><rect width="16" height="14" fill="url(#d)"/></svg>
<div style="left:417px;top:288px;width:15px;height:1px;background:#fff;"></div>
<div style="left:417px;top:288px;width:1px;height:13px;background:#fff;"></div>
<div style="left:432px;top:288px;width:1px;height:14px;background:#000;"></div>
<div style="left:417px;top:301px;width:16px;height:1px;background:#000;"></div>
<div style="left:431px;top:289px;width:1px;height:12px;background:#848484;"></div>
<div style="left:418px;top:300px;width:14px;height:1px;background:#848484;"></div>
<div style="left:421px;top:297px;width:6px;height:2px;background:#000;"></div>
<svg class="a" style="left:433px;top:288px" width="16" height="14"><rect width="16" height="14" fill="url(#d)"/></svg>
<div style="left:433px;top:288px;width:15px;height:1px;background:#fff;"></div>
<div style="left:433px;top:288px;width:1px;height:13px;background:#fff;"></div>
<div style="left:448px;top:288px;width:1px;height:14px;background:#000;"></div>
<div style="left:433px;top:301px;width:16px;height:1px;background:#000;"></div>
<div style="left:447px;top:289px;width:1px;height:12px;background:#848484;"></div>
<div style="left:434px;top:300px;width:14px;height:1px;background:#848484;"></div>
<div style="left:436px;top:290px;width:9px;height:2px;background:#000;"></div>
<div style="left:436px;top:290px;width:1px;height:9px;background:#000;"></div>
<div style="left:444px;top:290px;width:1px;height:9px;background:#000;"></div>
<div style="left:436px;top:298px;width:9px;height:1px;background:#000;"></div>
<svg class="a" style="left:451px;top:288px" width="16" height="14"><rect width="16" height="14" fill="url(#d)"/></svg>
<div style="left:451px;top:288px;width:15px;height:1px;background:#fff;"></div>
<div style="left:451px;top:288px;width:1px;height:13px;background:#fff;"></div>
<div style="left:466px;top:288px;width:1px;height:14px;background:#000;"></div>
<div style="left:451px;top:301px;width:16px;height:1px;background:#000;"></div>
<div style="left:465px;top:289px;width:1px;height:12px;background:#848484;"></div>
<div style="left:452px;top:300px;width:14px;height:1px;background:#848484;"></div>
<svg class="a" style="left:451px;top:288px" width="16" height="14" viewBox="0 0 16 14"><path d="M4.5 3.5l7 7M11.5 3.5l-7 7" stroke="#000" stroke-width="1.4" fill="none"/></svg>
<div style="left:365px;top:305px;width:104px;height:121px;background:#c6ffff;"></div>
<span class="t m" style="left:366px;top:307px;color:#000">A %00010000</span>
<span class="t m" style="left:366px;top:322px;color:#000">B $ff</span>
<span class="t m" style="left:366px;top:337px;color:#000">D $10ff</span>
<span class="t m" style="left:366px;top:352px;color:#000">X $ffff</span>
<span class="t m" style="left:366px;top:367px;color:#000">Y $ffff</span>
<span class="t m" style="left:366px;top:382px;color:#000">S $004a</span>
<div style="left:365px;top:395px;width:104px;height:15px;background:#ffff00;"></div>
<span class="t m" style="left:366px;top:397px;color:#000">P $c002</span>
<span class="t m" style="left:366px;top:412px;color:#000">C %11000000</span>
<svg class="a" style="left:11px;top:48px" width="24" height="24" viewBox="0 0 24 24"><path d="M13.5 3.5h5l3 3v6h-8z" fill="#ffff63" stroke="#000"/><path d="M18.5 3.5v3h3" fill="none" stroke="#000"/><rect x="15" y="6" width="4" height="1" fill="#0000c6"/><rect x="15" y="8" width="4" height="1" fill="#0000c6"/><rect x="15" y="10" width="4" height="1" fill="#0000c6"/><path d="M6 14V10Q6 8 8 8H9.500" fill="none" stroke="#000" stroke-width="2"/><path d="M8.500 4.500l3.800 3.500-3.800 3.500z" fill="#000"/><rect x="3.5" y="15.5" width="11" height="5" fill="#d6d6d6" stroke="#000"/><rect x="3.5" y="20.5" width="11" height="1" fill="#000" stroke="#000" stroke-width=".5"/><rect x="5" y="17" width="3" height="1" fill="#f00"/></svg>
<svg class="a" style="left:35px;top:48px" width="24" height="24" viewBox="0 0 24 24"><path d="M3.5 3.5h5l3 3v6h-8z" fill="#ffff63" stroke="#000"/><path d="M8.5 3.5v3h3" fill="none" stroke="#000"/><rect x="5" y="6" width="4" height="1" fill="#0000c6"/><rect x="5" y="8" width="4" height="1" fill="#0000c6"/><rect x="5" y="10" width="4" height="1" fill="#0000c6"/><path d="M11 7.5H15Q17 7.5 17 9.5V12" fill="none" stroke="#000" stroke-width="2"/><path d="M14 11.5h6l-3 3.5z" fill="#000"/><rect x="10.5" y="15.5" width="11" height="5" fill="#d6d6d6" stroke="#000"/><rect x="10.5" y="20.5" width="11" height="1" fill="#000" stroke="#000" stroke-width=".5"/><rect x="12" y="17" width="3" height="1" fill="#f00"/></svg>
<svg class="a" style="left:59px;top:48px" width="24" height="24" viewBox="0 0 24 24"><path d="M12 2L12 5" stroke="#303030" stroke-width="1.2"/><path d="M12 20L12 23" stroke="#303030" stroke-width="1.2"/><path d="M2 12L5 12" stroke="#303030" stroke-width="1.2"/><path d="M19 12L22 12" stroke="#303030" stroke-width="1.2"/><path d="M4 4L6 6" stroke="#303030" stroke-width="1.2"/><path d="M20 4L18 6" stroke="#303030" stroke-width="1.2"/><path d="M4 21L6 19" stroke="#303030" stroke-width="1.2"/><path d="M20 21L18 19" stroke="#303030" stroke-width="1.2"/><path d="M7.5 7.5h6l3 3v7.5h-9z" fill="url(#yy)" stroke="#000"/><path d="M13.5 7.5v3h3" fill="none" stroke="#000"/></svg>
<svg class="a" style="left:83px;top:48px" width="24" height="24" viewBox="0 0 24 24"><path d="M3.5 3.5h5l3 3v6h-8z" fill="#ffff63" stroke="#000"/><path d="M8.5 3.5v3h3" fill="none" stroke="#000"/><rect x="5" y="6" width="4" height="1" fill="#0000c6"/><rect x="5" y="8" width="4" height="1" fill="#0000c6"/><rect x="5" y="10" width="4" height="1" fill="#0000c6"/><path d="M11 7.5H15Q17 7.5 17 9.5V11" fill="none" stroke="#000" stroke-width="2"/><path d="M14 10.5h6l-3 3.5z" fill="#000"/><text x="2" y="21" textLength="19.5" lengthAdjust="spacingAndGlyphs" font-family="Liberation Serif,sans-serif" font-weight="bold" font-size="8.5" fill="#000" stroke="#000" stroke-width=".35" >10110</text></svg>
<svg class="a" style="left:107px;top:48px" width="24" height="24" viewBox="0 0 24 24"><path d="M4.5 4.5h16l-8 15z" fill="url(#cc)" stroke="#000" stroke-width="1.3" stroke-linejoin="round"/></svg>
<svg class="a" style="left:131px;top:48px" width="24" height="24" viewBox="0 0 24 24"><path d="M8.5 10.5l2-5h8.5l-2 5z" fill="#fff" stroke="#000" stroke-width=".8"/><path d="M11 8.5l1-1.5 1 1.5 1-1.5 1 1.5 1-1.5" stroke="#0000c6" fill="none" stroke-width=".9"/><rect x="3.5" y="10.5" width="14" height="5" fill="#d6d6d6" stroke="#000"/><rect x="17.5" y="9.5" width="3" height="8" fill="#848484" stroke="#000" stroke-width=".8"/><rect x="4.5" y="15.5" width="13" height="3" fill="#c6c6c6" stroke="#000"/><rect x="5" y="12" width="3" height="1" fill="#f00"/></svg>
<svg class="a" style="left:161px;top:48px" width="24" height="24" viewBox="0 0 24 24"><path d="M4.5 4.5v15.5l15.5-7.7z" fill="#0000ef" stroke="#000" stroke-width="1.3" stroke-linejoin="round"/><path d="M5.5 5.5l12 6" stroke="#008484" stroke-width="1.2"/><path d="M5.5 14v4.5l4-2z" fill="#000084"/></svg>
<svg class="a" style="left:185px;top:48px" width="24" height="24" viewBox="0 0 24 24"><g transform="translate(1,1)" fill="#fff"><path d="M4 4v16l13-8z"/><rect x="17" y="4" width="3" height="16"/></g><g fill="#848484"><path d="M4 4v16l13-8z"/><rect x="17" y="4" width="3" height="16"/></g></svg>
<svg class="a" style="left:209px;top:48px" width="24" height="24" viewBox="0 0 24 24"><g transform="translate(1,1)" fill="#fff"><path d="M3 3v13l12-6.5z"/></g><g fill="#848484"><path d="M3 3v13l12-6.5z"/></g><text x="3.5" y="22" textLength="19" lengthAdjust="spacingAndGlyphs" font-family="Liberation Sans,sans-serif" font-weight="bold" font-size="7" fill="#fff" stroke="#fff" stroke-width=".35" >$C001</text><text x="3" y="21.5" textLength="19" lengthAdjust="spacingAndGlyphs" font-family="Liberation Sans,sans-serif" font-weight="bold" font-size="7" fill="#848484" stroke="#848484" stroke-width=".35" >$C001</text></svg>
<svg class="a" style="left:233px;top:48px" width="24" height="24" viewBox="0 0 24 24"><text x="3.5" y="8.5" textLength="19" lengthAdjust="spacingAndGlyphs" font-family="Liberation Sans,sans-serif" font-weight="bold" font-size="7" fill="#fff" stroke="#fff" stroke-width=".35" >$C981</text><text x="3" y="8" textLength="19" lengthAdjust="spacingAndGlyphs" font-family="Liberation Sans,sans-serif" font-weight="bold" font-size="7" fill="#848484" stroke="#848484" stroke-width=".35" >$C981</text><g transform="translate(1,1)" fill="#fff"><path d="M4 9v12l12-6z"/></g><g fill="#848484"><path d="M4 9v12l12-6z"/></g></svg>
<svg class="a" style="left:257px;top:48px" width="24" height="24" viewBox="0 0 24 24"><rect x="4" y="4" width="17" height="17" fill="#fff"/><rect x="4" y="4" width="16" height="16" fill="#848484"/></svg>
<svg class="a" style="left:287px;top:48px" width="24" height="24" viewBox="0 0 24 24"><rect x="3.5" y="3.5" width="18" height="17" fill="#fff" stroke="#000"/><rect x="4" y="4" width="17" height="3" fill="#0000c6"/><rect x="16" y="5" width="1" height="1" fill="#fff"/><rect x="18" y="5" width="1" height="1" fill="#fff"/><rect x="4" y="7" width="17" height="1" fill="#000"/><rect x="6" y="9" width="4" height="1" fill="#0000c6"/><rect x="12" y="9" width="3" height="1" fill="#0000c6"/><rect x="17" y="9" width="2" height="1" fill="#0000c6"/><rect x="6" y="12" width="4" height="1" fill="#0000c6"/><rect x="12" y="12" width="3" height="1" fill="#0000c6"/><rect x="17" y="12" width="2" height="1" fill="#0000c6"/><rect x="6" y="15" width="4" height="1" fill="#0000c6"/><rect x="12" y="15" width="3" height="1" fill="#0000c6"/><rect x="17" y="15" width="2" height="1" fill="#0000c6"/><rect x="6" y="18" width="4" height="1" fill="#0000c6"/><rect x="12" y="18" width="3" height="1" fill="#0000c6"/><rect x="17" y="18" width="2" height="1" fill="#0000c6"/><path d="M9 10v10M4 15h10M5.5 11.5l7 7M12.5 11.5l-7 7" stroke="#ffff00" stroke-width="1.1"/><rect x="8" y="14" width="2" height="2" fill="#000"/></svg>
<svg class="a" style="left:317px;top:48px" width="24" height="24" viewBox="0 0 24 24"><text transform="translate(3.600,18.600) scale(.62,1)" font-family="Liberation Sans,sans-serif" font-weight="bold" font-size="18" letter-spacing="3.2" fill="#000" stroke="#000" stroke-width="2.6" stroke-linejoin="round">PC</text><text transform="translate(3.200,18.200) scale(.62,1)" font-family="Liberation Sans,sans-serif" font-weight="bold" font-size="18" letter-spacing="3.2" fill="#0000ff" stroke="#0000ff" stroke-width=".5">PC</text></svg>
<svg class="a" style="left:341px;top:48px" width="24" height="24" viewBox="0 0 24 24"><path d="M3.5 10.5l7-6h10l-6 6z" fill="#e80000" stroke="#848484" stroke-width=".8"/><path d="M3.5 10.5h11l6-6v2l-6 6h-11z" fill="#000"/><path d="M4 12.5h10l6-6" stroke="#ffff00" stroke-dasharray="1 1" fill="none"/><text x="3" y="20" textLength="19" lengthAdjust="spacingAndGlyphs" font-family="Liberation Sans,sans-serif" font-weight="bold" font-size="6.5" fill="#000" stroke="#000" stroke-width=".35" >RESET</text></svg>
<svg class="a" style="left:371px;top:48px" width="24" height="24" viewBox="0 0 24 24"><path d="M4.300 9L9.800 4.300V6.500H14C18.400 6.500 18.400 10 18.400 12C18.400 16 16 18.400 12 18.400L9 17.500C12 16 15 15.500 15 12.500C15 10.500 13.500 10.500 12.500 10.500H9.800V13.400Z" fill="#00e800" stroke="#000" stroke-linejoin="round"/></svg>
<svg class="a" style="left:395px;top:48px" width="24" height="24" viewBox="0 0 24 24"><path d="M4 3.500l11.500 12M20 3.500l-11.500 12" stroke="#000" stroke-width="2.800"/><path d="M4.200 3.700l10.300 10.800M19.800 3.700l-10.300 10.800" stroke="#fff" stroke-width="1.300"/><ellipse cx="8" cy="17.500" rx="1.700" ry="2.700" fill="#d6d6d6" stroke="#0000c6" stroke-width="1.400" transform="rotate(25 8 17.500)"/><ellipse cx="16.300" cy="17.500" rx="1.700" ry="2.700" fill="#d6d6d6" stroke="#0000c6" stroke-width="1.400" transform="rotate(-25 16.300 17.500)"/></svg>
<svg class="a" style="left:419px;top:48px" width="24" height="24" viewBox="0 0 24 24"><path d="M3.5 3.5h5l3 3v7h-8z" fill="#b8b8b8" stroke="#8c8c8c"/><path d="M8.5 3.5v3h3" fill="none" stroke="#8c8c8c"/><rect x="5" y="6" width="4" height="1" fill="#8c8c8c"/><rect x="5" y="8" width="4" height="1" fill="#8c8c8c"/><rect x="5" y="10" width="4" height="1" fill="#8c8c8c"/><path d="M13.5 11.5h5l3 3v7h-8z" fill="#b8b8b8" stroke="#8c8c8c"/><path d="M18.5 11.5v3h3" fill="none" stroke="#8c8c8c"/><rect x="15" y="14" width="4" height="1" fill="#8c8c8c"/><rect x="15" y="16" width="4" height="1" fill="#8c8c8c"/><rect x="15" y="18" width="4" height="1" fill="#8c8c8c"/><path d="M12 5.500H15Q17 5.500 17 7.500V8" fill="none" stroke="#a0a0a0" stroke-width="2"/><path d="M14 7.500h6l-3 3.500z" fill="#a0a0a0"/></svg>
<svg class="a" style="left:443px;top:48px" width="24" height="24" viewBox="0 0 24 24"><rect x="3.500" y="5.500" width="13" height="13" fill="#d6d6d6" stroke="#000"/><rect x="6.500" y="2.500" width="6" height="3.500" rx="1.500" fill="#0000c6" stroke="#000" stroke-width=".8"/><path d="M6.500 8.500l5 5" stroke="#000" stroke-width="2"/><path d="M13.500 9.500v6h-6z" fill="#000"/><path d="M13.5 12.5h5l3 3v6h-8z" fill="#ffff63" stroke="#000"/><path d="M18.5 12.5v3h3" fill="none" stroke="#000"/><rect x="15" y="15" width="4" height="1" fill="#0000c6"/><rect x="15" y="17" width="4" height="1" fill="#0000c6"/><rect x="15" y="19" width="4" height="1" fill="#0000c6"/></svg>
<svg class="a" style="left:473px;top:48px" width="24" height="24" viewBox="0 0 24 24"><path d="M15.500 9.800H22V21.600H10V15z" fill="url(#yy)"/><path d="M4.900 2.100L2.100 4.900 8.600 11.400 11.400 8.600z" fill="#fff" stroke="#000" stroke-width="1"/><path d="M8.600 11.400L11.400 8.600 15.500 8.800 9 15z" fill="#e80000" stroke="#000" stroke-width="1" stroke-linejoin="round"/></svg>
<svg class="a" style="left:497px;top:48px" width="24" height="24" viewBox="0 0 24 24"><g transform="translate(1,1)"><path d="M15.500 9.800H22V21.600H10V15z" fill="none"/><path d="M4.900 2.100L2.100 4.900 8.600 11.400 11.400 8.600z" fill="#fff" stroke="#fff" stroke-width="1"/><path d="M8.600 11.400L11.400 8.600 15.500 8.800 9 15z" fill="#fff" stroke="#fff" stroke-width="1" stroke-linejoin="round"/></g><path d="M15.500 9.800H22V21.600H10V15z" fill="url(#gg)"/><path d="M4.900 2.100L2.100 4.900 8.600 11.400 11.400 8.600z" fill="#c0c0c0" stroke="#848484" stroke-width="1"/><path d="M8.600 11.400L11.400 8.600 15.500 8.800 9 15z" fill="#848484" stroke="#848484" stroke-width="1" stroke-linejoin="round"/></svg>
<svg class="a" style="left:527px;top:48px" width="24" height="24" viewBox="0 0 24 24"><rect x="3.5" y="3.5" width="12" height="9" fill="#fff" stroke="#000"/><rect x="4" y="4" width="11" height="2" fill="#0000c6"/><rect x="5" y="8" width="7" height="1" fill="#0000c6"/><rect x="5" y="10" width="5" height="1" fill="#0000c6"/><rect x="5.5" y="6.5" width="12" height="9" fill="#fff" stroke="#000"/><rect x="6" y="7" width="11" height="2" fill="#0000c6"/><rect x="7" y="11" width="7" height="1" fill="#0000c6"/><rect x="7" y="13" width="5" height="1" fill="#0000c6"/><rect x="7.5" y="9.5" width="13" height="10" fill="#fff" stroke="#000"/><rect x="8" y="10" width="12" height="2" fill="#0000c6"/><rect x="9" y="14" width="8" height="1" fill="#0000c6"/><rect x="9" y="16" width="6" height="1" fill="#0000c6"/></svg>
<svg class="a" style="left:551px;top:48px" width="24" height="24" viewBox="0 0 24 24"><rect x="3.5" y="3.5" width="17" height="8" fill="#fff" stroke="#000"/><rect x="4" y="4" width="16" height="2" fill="#0000c6"/><rect x="5" y="8" width="12" height="1" fill="#0000c6"/><rect x="5" y="10" width="10" height="1" fill="#0000c6"/><rect x="3.5" y="11.5" width="8" height="8" fill="#fff" stroke="#000"/><rect x="4" y="12" width="7" height="2" fill="#0000c6"/><rect x="5" y="16" width="3" height="1" fill="#0000c6"/><rect x="5" y="18" width="1" height="1" fill="#0000c6"/><rect x="11.5" y="11.5" width="9" height="8" fill="#fff" stroke="#000"/><rect x="12" y="12" width="8" height="2" fill="#0000c6"/><rect x="13" y="16" width="4" height="1" fill="#0000c6"/><rect x="13" y="18" width="2" height="1" fill="#0000c6"/></svg>
<svg class="a" style="left:581px;top:48px" width="24" height="24" viewBox="0 0 24 24"><text x="12" y="19" text-anchor="middle" font-family="Liberation Sans,sans-serif" font-weight="bold" font-size="19" fill="#00e8e8" stroke="#000" stroke-width=".9">?</text></svg>
<svg class="a" style="left:605px;top:48px" width="24" height="24" viewBox="0 0 24 24"><circle cx="12.500" cy="12.500" r="8.500" fill="#008484" stroke="#000"/><text x="12.500" y="18.500" text-anchor="middle" font-family="Liberation Serif,serif" font-weight="bold" font-style="italic" font-size="18" fill="#fff">i</text></svg>
<svg class="a" style="left:11px;top:80px" width="24" height="24" viewBox="0 0 24 24"><path d="M4.500 4.500v15l15.500-7.500z" fill="url(#cc)" stroke="#000" stroke-width="1.3" stroke-linejoin="round"/></svg>
<svg class="a" style="left:35px;top:80px" width="24" height="24" viewBox="0 0 24 24"><path d="M4.500 4.500v15l13-7.500z" fill="url(#cc)" stroke="#000" stroke-width="1.3" stroke-linejoin="round"/><rect x="17.500" y="4.500" width="2.500" height="15" fill="url(#cc)" stroke="#000"/></svg>
<svg class="a" style="left:59px;top:80px" width="24" height="24" viewBox="0 0 24 24"><path d="M3.500 3.500v12l11.500-6z" fill="url(#cc)" stroke="#000" stroke-width="1.3" stroke-linejoin="round"/><text x="3" y="21.5" textLength="19" lengthAdjust="spacingAndGlyphs" font-family="Liberation Sans,sans-serif" font-weight="bold" font-size="7" fill="#000" stroke="#000" stroke-width=".35" >$C001</text></svg>
<svg class="a" style="left:83px;top:80px" width="24" height="24" viewBox="0 0 24 24"><text x="3" y="8" textLength="19" lengthAdjust="spacingAndGlyphs" font-family="Liberation Sans,sans-serif" font-weight="bold" font-size="7" fill="#000" stroke="#000" stroke-width=".35" >$C981</text><path d="M4.500 9.500v11.500l11.500-5.700z" fill="url(#cc)" stroke="#000" stroke-width="1.3" stroke-linejoin="round"/></svg>
<svg class="a" style="left:107px;top:80px" width="24" height="24" viewBox="0 0 24 24"><rect x="4" y="4" width="17" height="17" fill="#fff"/><rect x="4" y="4" width="16" height="16" fill="#848484"/><rect x="6" y="6" width="12" height="12" fill="url(#gg)"/></svg>
<svg class="a" style="left:137px;top:80px" width="24" height="24" viewBox="0 0 24 24"><rect x="3.5" y="3.5" width="18" height="17" fill="url(#cc)" stroke="#000"/><rect x="4" y="4" width="17" height="3" fill="#0000c6"/><rect x="16" y="5" width="1" height="1" fill="#fff"/><rect x="18" y="5" width="1" height="1" fill="#fff"/><rect x="4" y="7" width="17" height="1" fill="#000"/><rect x="6" y="9" width="4" height="1" fill="#0000c6"/><rect x="12" y="9" width="3" height="1" fill="#0000c6"/><rect x="17" y="9" width="2" height="1" fill="#0000c6"/><rect x="6" y="12" width="4" height="1" fill="#0000c6"/><rect x="12" y="12" width="3" height="1" fill="#0000c6"/><rect x="17" y="12" width="2" height="1" fill="#0000c6"/><rect x="6" y="15" width="4" height="1" fill="#0000c6"/><rect x="12" y="15" width="3" height="1" fill="#0000c6"/><rect x="17" y="15" width="2" height="1" fill="#0000c6"/><rect x="6" y="18" width="4" height="1" fill="#0000c6"/><rect x="12" y="18" width="3" height="1" fill="#0000c6"/><rect x="17" y="18" width="2" height="1" fill="#0000c6"/><path d="M9 10v10M4 15h10M5.5 11.5l7 7M12.5 11.5l-7 7" stroke="#ffff00" stroke-width="1.1"/><rect x="8" y="14" width="2" height="2" fill="#000"/></svg>
<svg class="a" style="left:167px;top:80px" width="24" height="24" viewBox="0 0 24 24"><text transform="translate(3.600,18.600) scale(.62,1)" font-family="Liberation Sans,sans-serif" font-weight="bold" font-size="18" letter-spacing="3.2" fill="#000" stroke="#000" stroke-width="2.6" stroke-linejoin="round">PC</text><text transform="translate(3.200,18.200) scale(.62,1)" font-family="Liberation Sans,sans-serif" font-weight="bold" font-size="18" letter-spacing="3.2" fill="#52ffff" stroke="#52ffff" stroke-width=".5">PC</text></svg>
<svg class="a" style="left:6px;top:5px" width="17" height="16" viewBox="0 0 17 16"><text x="0.5" y="6" textLength="15" lengthAdjust="spacingAndGlyphs" font-family="Liberation Mono,sans-serif" font-weight="bold" font-size="7" fill="#94945a" stroke="#94945a" stroke-width=".35" >HC11</text><path d="M0 8h11l6 6h-11z" fill="#848484"/><path d="M6.5 12v-2.500l1.250 1.500 1.250-1.500v2.500" fill="none" stroke="#fff" stroke-width=".9"/><path d="M0.3 8.8l5.700 5.700h11" fill="none" stroke="#000" stroke-width="1.300"/><rect x="0" y="10" width="1" height="1" fill="#ffff00"/><rect x="2" y="12" width="1" height="1" fill="#ffff00"/><rect x="4" y="14" width="1" height="1" fill="#ffff00"/><rect x="6" y="15" width="1" height="1" fill="#ffff00"/><rect x="8" y="15" width="1" height="1" fill="#ffff00"/><rect x="10" y="15" width="1" height="1" fill="#ffff00"/><rect x="12" y="15" width="1" height="1" fill="#ffff00"/><rect x="14" y="15" width="1" height="1" fill="#ffff00"/><rect x="16" y="15" width="1" height="1" fill="#ffff00"/></svg>
<svg class="a" style="left:17px;top:120px" width="17" height="16" viewBox="0 0 17 16"><path d="M0 8h11l6 6h-11z" fill="#848484"/><path d="M6.5 12v-2.500l1.250 1.500 1.250-1.500v2.500" fill="none" stroke="#fff" stroke-width=".9"/><path d="M0.3 8.8l5.700 5.700h11" fill="none" stroke="#000" stroke-width="1.300"/><rect x="0" y="10" width="1" height="1" fill="#ffff00"/><rect x="2" y="12" width="1" height="1" fill="#ffff00"/><rect x="4" y="14" width="1" height="1" fill="#ffff00"/><rect x="6" y="15" width="1" height="1" fill="#ffff00"/><rect x="8" y="15" width="1" height="1" fill="#ffff00"/><rect x="10" y="15" width="1" height="1" fill="#ffff00"/><rect x="12" y="15" width="1" height="1" fill="#ffff00"/><rect x="14" y="15" width="1" height="1" fill="#ffff00"/><rect x="16" y="15" width="1" height="1" fill="#ffff00"/><path d="M8.500 .500h5l2.500 2.500v5.500h-7.500z" fill="#ffff63" stroke="#000"/><rect x="10" y="3" width="4" height="1" fill="#0000c6"/><rect x="10" y="5" width="4" height="1" fill="#0000c6"/></svg>
<svg class="a" style="left:264px;top:119px" width="17" height="16" viewBox="0 0 17 16"><path d="M0 5.500q2-2.500 4-1t4-1" fill="none" stroke="#c6c6c6" stroke-width=".9"/><path d="M8 3.500l3-2.500v6z" fill="#b4b4b4"/><path d="M11 2.500h5M11 4.500h5" stroke="#e0e0e0" stroke-width="1.200"/><path d="M0 8h11l6 6h-11z" fill="#848484" stroke="#b4b4b4" stroke-width=".9"/><path d="M6.5 12v-2.500l1.250 1.500 1.250-1.500v2.500" fill="none" stroke="#fff" stroke-width=".9"/><path d="M0.3 8.8l5.700 5.700h11" fill="none" stroke="#000" stroke-width="1.300"/><rect x="0" y="10" width="1" height="1" fill="#ffff00"/><rect x="2" y="12" width="1" height="1" fill="#ffff00"/><rect x="4" y="14" width="1" height="1" fill="#ffff00"/><rect x="6" y="15" width="1" height="1" fill="#ffff00"/><rect x="8" y="15" width="1" height="1" fill="#ffff00"/><rect x="10" y="15" width="1" height="1" fill="#ffff00"/><rect x="12" y="15" width="1" height="1" fill="#ffff00"/><rect x="14" y="15" width="1" height="1" fill="#ffff00"/><rect x="16" y="15" width="1" height="1" fill="#ffff00"/></svg>
<svg class="a" style="left:16px;top:287px" width="17" height="16" viewBox="0 0 17 16"><path d="M0 .5v6l3-3z" fill="#0000ef"/><rect x="3" y="3" width="13" height="1.500" fill="#00e800"/><rect x="3" y="1" width="13" height="1" fill="#c6c6c6"/><rect x="3" y="5.500" width="13" height="1" fill="#c6c6c6"/><path d="M0 8h11l6 6h-11z" fill="#848484" stroke="#b4b4b4" stroke-width=".9"/><path d="M6.5 12v-2.500l1.250 1.500 1.250-1.500v2.500" fill="none" stroke="#fff" stroke-width=".9"/><path d="M0.3 8.8l5.700 5.700h11" fill="none" stroke="#000" stroke-width="1.300"/><rect x="0" y="10" width="1" height="1" fill="#ffff00"/><rect x="2" y="12" width="1" height="1" fill="#ffff00"/><rect x="4" y="14" width="1" height="1" fill="#ffff00"/><rect x="6" y="15" width="1" height="1" fill="#ffff00"/><rect x="8" y="15" width="1" height="1" fill="#ffff00"/><rect x="10" y="15" width="1" height="1" fill="#ffff00"/><rect x="12" y="15" width="1" height="1" fill="#ffff00"/><rect x="14" y="15" width="1" height="1" fill="#ffff00"/><rect x="16" y="15" width="1" height="1" fill="#ffff00"/></svg>
<svg class="a" style="left:367px;top:287px" width="17" height="16" viewBox="0 0 17 16"><text x="0.5" y="6" textLength="15" lengthAdjust="spacingAndGlyphs" font-family="Liberation Sans,sans-serif" font-weight="bold" font-size="7.5" fill="#c0c0c0" stroke="#c0c0c0" stroke-width=".35" >CPU</text><path d="M0 8h11l6 6h-11z" fill="#848484" stroke="#b4b4b4" stroke-width=".9"/><path d="M6.5 12v-2.500l1.250 1.500 1.250-1.500v2.500" fill="none" stroke="#fff" stroke-width=".9"/><path d="M0.3 8.8l5.700 5.700h11" fill="none" stroke="#000" stroke-width="1.300"/><rect x="0" y="10" width="1" height="1" fill="#ffff00"/><rect x="2" y="12" width="1" height="1" fill="#ffff00"/><rect x="4" y="14" width="1" height="1" fill="#ffff00"/><rect x="6" y="15" width="1" height="1" fill="#ffff00"/><rect x="8" y="15" width="1" height="1" fill="#ffff00"/><rect x="10" y="15" width="1" height="1" fill="#ffff00"/><rect x="12" y="15" width="1" height="1" fill="#ffff00"/><rect x="14" y="15" width="1" height="1" fill="#ffff00"/><rect x="16" y="15" width="1" height="1" fill="#ffff00"/></svg>
<svg class="a" style="left:235px;top:138px" width="13" height="13" viewBox="0 0 13 13"><path d="M3 8l3.500-4 3.500 4z" fill="#fff" transform="translate(1,1)"/><path d="M3 8l3.500-4 3.500 4z" fill="#848484"/></svg>
<svg class="a" style="left:235px;top:248px" width="13" height="13" viewBox="0 0 13 13"><path d="M3 5l3.500 4 3.500-4z" fill="#fff" transform="translate(1,1)"/><path d="M3 5l3.500 4 3.500-4z" fill="#848484"/></svg>
<svg class="a" style="left:15px;top:261px" width="13" height="13" viewBox="0 0 13 13"><path d="M8 3l-4 3.500 4 3.500z" fill="#fff" transform="translate(1,1)"/><path d="M8 3l-4 3.500 4 3.500z" fill="#848484"/></svg>
<svg class="a" style="left:222px;top:261px" width="13" height="13" viewBox="0 0 13 13"><path d="M5 3l4 3.500-4 3.500z" fill="#fff" transform="translate(1,1)"/><path d="M5 3l4 3.500-4 3.500z" fill="#848484"/></svg>
<svg class="a" style="left:235px;top:261px" width="13" height="13"><rect width="13" height="13" fill="url(#d)"/></svg>
<svg class="a" style="left:235px;top:261px" width="13" height="13" viewBox="0 0 13 13"><path d="M12 2L2 12M12 6L6 12M12 10L10 12" stroke="#848484" stroke-width="1.200"/><path d="M12 1L1 12M12 5L5 12M12 9L9 12" stroke="#fff" stroke-width="1"/></svg>
<svg class="a" style="left:610px;top:438px" width="18" height="16" viewBox="0 0 18 16"><rect x="2.500" y=".5" width="7" height="5" fill="#00e8e8" stroke="#000"/><rect x=".5" y="6.500" width="10" height="2" fill="#d6d6d6" stroke="#000"/><rect x="2.500" y="9.500" width="7" height="3" fill="#d6d6d6" stroke="#000"/><rect x=".5" y="12.500" width="10" height="2.500" fill="#d6d6d6" stroke="#000"/><rect x="2" y="13.500" width="2" height="1" fill="#00c600"/><path d="M11 4.500h5.500v9h-5" fill="none" stroke="#000" stroke-width="1.200" stroke-dasharray="2 1"/></svg>
</body></html>
